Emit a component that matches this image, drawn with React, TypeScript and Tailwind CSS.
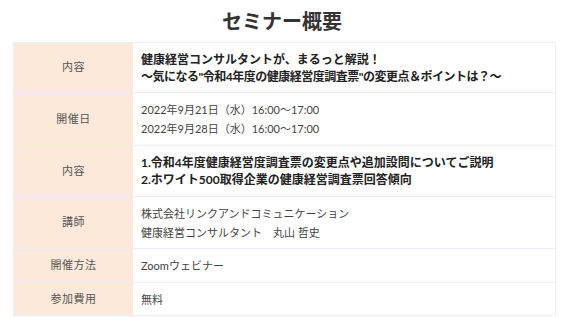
import React from 'react';

type Row = {
  label: string;
  lines: string[];
  bold?: boolean;
  height: string;
};

const rows: Row[] = [
  {
    label: '内容',
    lines: [
      '健康経営コンサルタントが、まるっと解説！',
      '～気になる"令和4年度の健康経営度調査票"の変更点＆ポイントは？～',
    ],
    bold: true,
    height: 'h-[49px]',
  },
  {
    label: '開催日',
    lines: ['2022年9月21日（水）16:00～17:00', '2022年9月28日（水）16:00～17:00'],
    height: 'h-[53px]',
  },
  {
    label: '内容',
    lines: [
      '1.令和4年度健康経営度調査票の変更点や追加設問についてご説明',
      '2.ホワイト500取得企業の健康経営調査票回答傾向',
    ],
    bold: true,
    height: 'h-[51px]',
  },
  {
    label: '講師',
    lines: ['株式会社リンクアンドコミュニケーション', '健康経営コンサルタント　丸山 哲史'],
    height: 'h-[52px]',
  },
  {
    label: '開催方法',
    lines: ['Zoomウェビナー'],
    height: 'h-[34px]',
  },
  {
    label: '参加費用',
    lines: ['無料'],
    height: 'h-[33px]',
  },
];

const App: React.FC = () => {
  return (
    <div
      className="min-h-screen bg-white"
      style={{ fontFamily: "Lato, 'Noto Sans CJK JP', sans-serif" }}
    >
      <h1 className="pt-[9px] h-[42px] text-center text-[20px] leading-[24px] font-bold text-[#333]">
        セミナー概要
      </h1>

      <div className="mx-[13px] w-[543px] border border-[#e9eef7]">
        {rows.map((row, i) => (
          <div
            key={i}
            className={`flex ${row.height} ${i > 0 ? 'border-t border-[#e9eef7]' : ''}`}
          >
            <div className="w-[119px] shrink-0 bg-[#fde9d9] flex items-center justify-center text-[11px] text-[#555] tracking-[0.5px]">
              {row.label}
            </div>
            <div className="flex-1 pl-[8px] flex flex-col justify-center">
              {row.lines.map((line, j) =>
                row.bold ? (
                  <p
                    key={j}
                    className={`text-[12px] leading-[17px] font-bold text-[#222] ${
                      i === 0 && j === 1 ? 'tracking-[-0.5px]' : ''
                    }`}
                  >
                    {line}
                  </p>
                ) : (
                  <p key={j} className="text-[11px] leading-[19px] text-[#444]">
                    {line}
                  </p>
                )
              )}
            </div>
          </div>
        ))}
      </div>
    </div>
  );
};

export default App;
